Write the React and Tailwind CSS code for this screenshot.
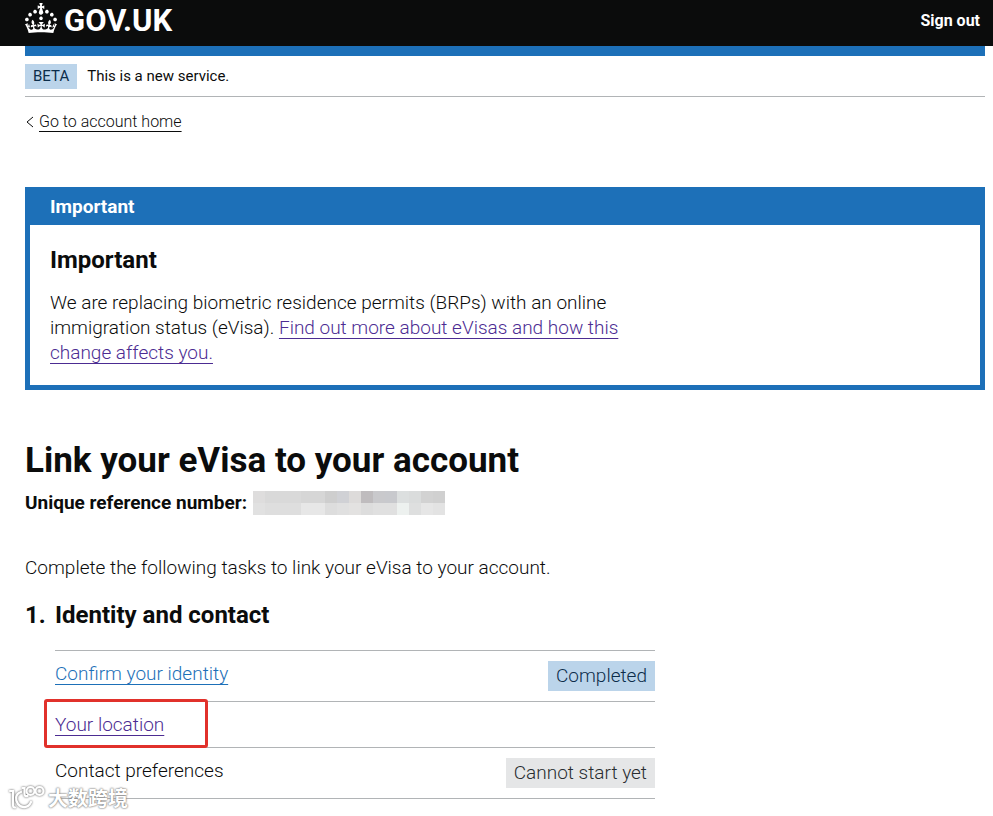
const mosaic = [
  ["bg-[#dedddd]", "bg-[#e1e1e1]"],
  ["bg-[#d9d9d9]", "bg-[#dedede]"],
  ["bg-[#d9d9d9]", "bg-[#dedede]"],
  ["bg-[#d9d9d9]", "bg-[#dedede]"],
  ["bg-[#d6d6d6]", "bg-[#e7e7e7]"],
  ["bg-[#d6d6d6]", "bg-[#e7e7e7]"],
  ["bg-[#cecece]", "bg-[#dddddd]"],
  ["bg-[#d0d1d5]", "bg-[#e0e0e0]"],
  ["bg-[#dddbda]", "bg-[#e3e2e1]"],
  ["bg-[#bfbcbe]", "bg-[#dddddd]"],
  ["bg-[#c9c9cc]", "bg-[#e0e0e0]"],
  ["bg-[#c8c9cd]", "bg-[#e0e0e0]"],
  ["bg-[#dcdfdf]", "bg-[#edf1ef]"],
  ["bg-[#dadcdc]", "bg-[#dedfdf]"],
  ["bg-[#d2d2d2]", "bg-[#e6e6e6]"],
  ["bg-[#d0d0d0]", "bg-[#e3e3e3]"],
];

const tasks = [
  { name: "Confirm your identity", status: "Completed", link: "text-[#1d70b8]" },
  { name: "Your location", link: "text-[#4c2c92]", highlighted: true },
  { name: "Contact preferences", status: "Cannot start yet" },
];

function statusTone(status) {
  if (status === "Completed") return "bg-[#bbd4ea] text-[#0c2d4a]";
  return "bg-[#e5e6e7] text-[#282d30]";
}

function Crown() {
  return (
    <svg viewBox="0 0 32 30" className="h-[30px] w-8" fill="currentColor" aria-hidden="true">
      <path d="M22.6 10.4c-1 .4-2-.1-2.4-1-.4-.9.1-2 1-2.4.9-.4 2 .1 2.4 1s-.1 2-1 2.4m-5.9 6.7c-.9.4-2-.1-2.4-1-.4-.9.1-2 1-2.4.9-.4 2 .1 2.4 1s-.1 2-1 2.4m10.8-3.7c-1 .4-2-.1-2.4-1-.4-.9.1-2 1-2.4.9-.4 2 .1 2.4 1s0 2-1 2.4m3.3 4.8c-1 .4-2-.1-2.4-1-.4-.9.1-2 1-2.4.9-.4 2 .1 2.4 1s-.1 2-1 2.4M17 4.7l2.3 1.2V2.5l-2.3.7-.2-.2.9-3h-3.4l.9 3-.2.2c-.1.1-2.3-.7-2.3-.7v3.4L15 4.7c.1.1.1.2.2.2l-1.3 4c-.1.2-.1.4-.1.6 0 1.1.8 2 1.9 2.2h.7c1-.2 1.9-1.1 1.9-2.1 0-.2 0-.4-.1-.6l-1.3-4c-.1-.2 0-.2.1-.3m-7.6 5.7c.9.4 2-.1 2.4-1 .4-.9-.1-2-1-2.4-.9-.4-2 .1-2.4 1s0 2 1 2.4m-5 3c.9.4 2-.1 2.4-1 .4-.9-.1-2-1-2.4-.9-.4-2 .1-2.4 1s.1 2 1 2.4m-3.2 4.8c.9.4 2-.1 2.4-1 .4-.9-.1-2-1-2.4-.9-.4-2 .1-2.4 1s0 2 1 2.4m14.8 11c4.4 0 8.6.3 12.3.8 1.1-4.5 2.4-7 3.7-8.8l-2.5-.9c.2 1.3.3 1.9 0 2.7-.4-.4-.8-1.1-1.1-2.3l-1.2 4c.7-.5 1.3-.8 2-.9-1.1 2.5-2.6 3.1-3.5 3-1.1-.2-1.7-1.2-1.5-2.1.3-1.2 1.5-1.5 2.1-.1 1.1-2.3-.8-3-2-2.3 1.9-1.9 2.1-3.5.6-5.6-2.1 1.6-2.1 3.2-1.2 5.5-1.2-1.4-3.2-.6-2.5 1.6.9-1.4 2.1-.5 1.9.8-.2 1.1-1.7 2.1-3.5 1.9-2.7-.2-2.9-2.1-2.9-3.6.7-.1 1.9.5 2.9 1.9l.4-4.3c-1.1 1.1-2.1 1.4-3.2 1.4.4-1.2 2.1-3 2.1-3h-5.4s1.7 1.9 2.1 3c-1.1 0-2.1-.2-3.2-1.4l.4 4.3c1-1.4 2.2-2 2.9-1.9-.1 1.5-.2 3.4-2.9 3.6-1.9.2-3.4-.8-3.5-1.9-.2-1.3 1-2.2 1.9-.8.7-2.3-1.2-3-2.5-1.6.9-2.2.9-3.9-1.2-5.5-1.5 2-1.3 3.7.6 5.6-1.2-.7-3.1 0-2 2.3.6-1.4 1.8-1.1 2.1.1.2.9-.3 1.9-1.5 2.1-.9.2-2.4-.5-3.5-3 .6 0 1.2.3 2 .9l-1.2-4c-.3 1.1-.7 1.9-1.1 2.3-.3-.8-.2-1.4 0-2.7l-2.9.9C1.3 23 2.6 25.5 3.7 30c3.7-.5 7.9-.8 12.3-.8" />
    </svg>
  );
}

function Watermark() {
  return (
    <div className="pointer-events-none absolute bottom-[5px] left-2 flex items-center gap-[2px]">
      <svg
        viewBox="0 0 38 26"
        className="h-[26px] w-[38px] drop-shadow-[0_0_1px_#555]"
        fill="none"
        stroke="#fff"
        strokeWidth="2.2"
        strokeLinecap="round"
        aria-hidden="true"
      >
        <path d="M2 6h3v14c0 1.500.5 2.500 2 2.500" />
        <path d="M13 7c-6 2-6 8-3 12s10 5 13-2" />
        <path d="M14.500 3h2v6c0 2 1.500 2.500 3 2" />
        <circle cx="22.500" cy="6" r="4" />
        <circle cx="31.500" cy="6" r="4" />
      </svg>
      <span className="font-['Noto_Sans_CJK_SC',sans-serif] text-[20px] leading-6 font-bold text-white [text-shadow:0_0_2px_#777,0_0_2px_#888]">
        大数跨境
      </span>
    </div>
  );
}

export default function App() {
  return (
    <div className="relative min-h-screen bg-white pb-[17px] font-['Roboto',sans-serif] text-[19px] leading-[25px] font-light text-[#0b0c0c]">
      <header className="flex h-[46px] items-center justify-between bg-[#0b0c0c] pr-[13px] pb-[10px] pl-[25px] text-white">
        <a href="#" className="flex items-center gap-[7px]" aria-label="GOV.UK">
          <Crown />
          <span className="pt-[6px] text-[31px] leading-[30px] font-bold">GOV.UK</span>
        </a>
        <a href="#" className="pt-[6px] text-[16px] leading-5 font-bold">
          Sign out
        </a>
      </header>

      <div className="mr-2 ml-[25px] max-w-[960px]">
        <div className="h-[10px] bg-[#1d70b8]" />
        <div className="flex items-center gap-[10px] border-b border-[#b1b4b6] pt-2 pb-[7px] text-[15px]">
          <strong className="bg-[#bbd4ea] px-2 font-normal text-[#0c2d4a]">BETA</strong>
          <span className="font-normal">This is a new service.</span>
        </div>
        <div className="flex items-center gap-1 pt-3 text-[16px]">
          <svg viewBox="0 0 10 12" className="h-3 w-[10px]" fill="none" stroke="#0b0c0c" aria-hidden="true">
            <path d="M8 1 2 6l6 5" />
          </svg>
          <a href="#" className="underline decoration-1 underline-offset-4">
            Go to account home
          </a>
        </div>

        <main className="pt-[53px]">
          <section className="border-[5px] border-[#1d70b8]" aria-labelledby="banner-title">
            <div className="bg-[#1d70b8] px-5 pt-[2px] pb-[6px] text-white">
              <h2 id="banner-title" className="font-bold">
                Important
              </h2>
            </div>
            <div className="px-5 py-5">
              <h3 className="text-[24px] leading-[30px] font-bold">Important</h3>
              <p className="mt-[15px] max-w-[576px]">
                We are replacing biometric residence permits (BRPs) with an online immigration status (eVisa).{" "}
                <a href="#" className="text-[#4c2c92] underline decoration-1 underline-offset-4">
                  Find out more about eVisas and how this change affects you.
                </a>
              </p>
            </div>
          </section>

          <h1 className="mt-[51px] text-[35px] leading-10 font-bold">Link your eVisa to your account</h1>
          <div className="mt-[9px] flex items-center gap-[6px]">
            <strong className="font-bold">Unique reference number:</strong>
            <span className="flex" aria-hidden="true">
              {mosaic.map(([top, bottom], index) => (
                <span key={index} className="w-3">
                  <span className={`block h-3 ${top}`} />
                  <span className={`block h-3 ${bottom}`} />
                </span>
              ))}
            </span>
          </div>

          <p className="mt-10">Complete the following tasks to link your eVisa to your account.</p>

          <h2 className="mt-5 flex text-[24px] leading-[30px] font-bold">
            <span className="w-[30px]">1.</span>
            Identity and contact
          </h2>
          <ul className="mt-5 ml-[30px] max-w-[600px] border-t border-[#b1b4b6]">
            {tasks.map((task) => (
              <li
                key={task.name}
                className="relative flex items-start justify-between border-b border-[#b1b4b6] py-[10px]"
              >
                {task.link ? (
                  <a href="#" className={`underline decoration-1 underline-offset-4 ${task.link}`}>
                    {task.name}
                  </a>
                ) : (
                  <span>{task.name}</span>
                )}
                {task.status && (
                  <strong className={`px-2 py-[2px] leading-[26px] font-light ${statusTone(task.status)}`}>
                    {task.status}
                  </strong>
                )}
                {task.highlighted && (
                  <span className="pointer-events-none absolute -top-[3px] -left-[11px] h-[49px] w-[164px] rounded-[3px] border-[3px] border-[#e1312b]" />
                )}
              </li>
            ))}
          </ul>
        </main>
      </div>
      <Watermark />
    </div>
  );
}
